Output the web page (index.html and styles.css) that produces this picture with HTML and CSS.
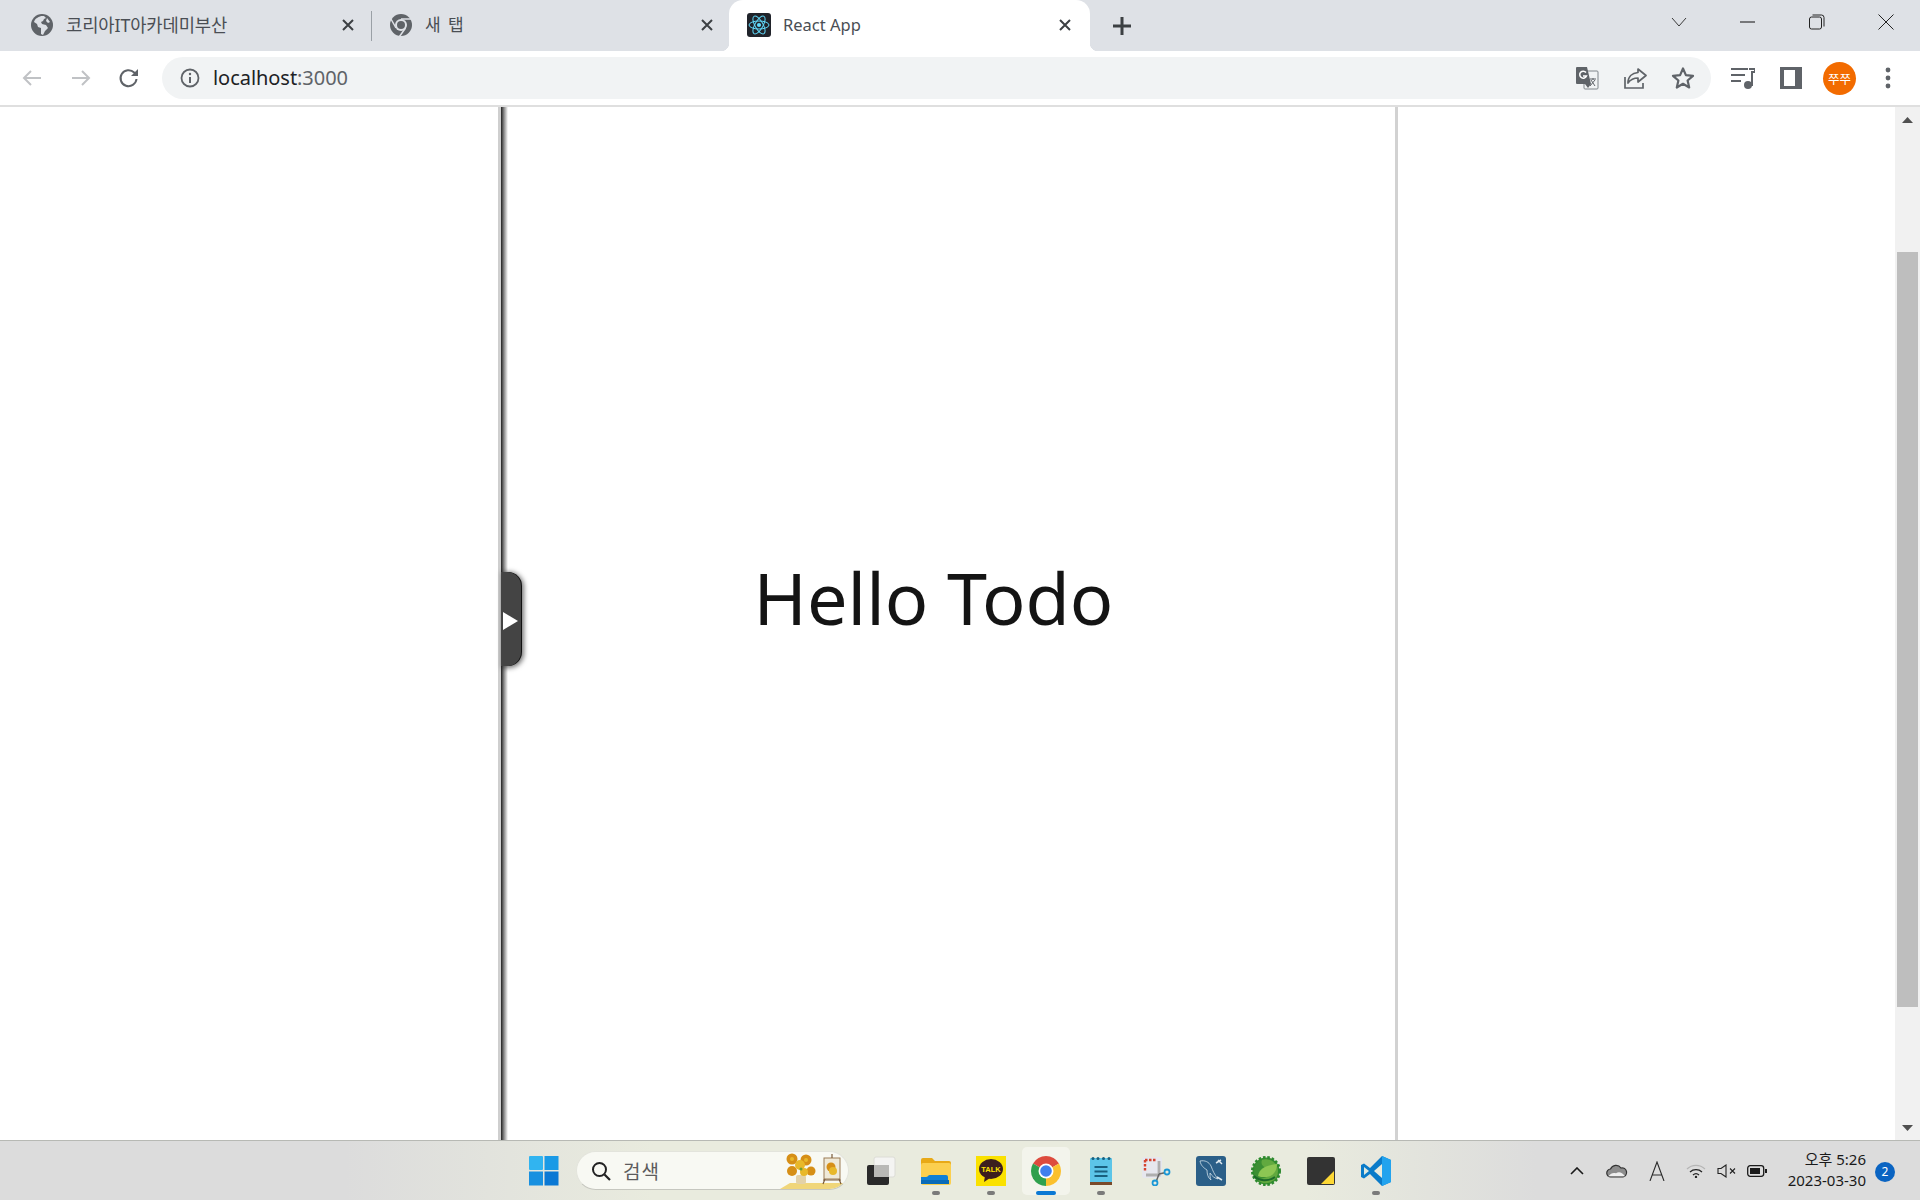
FILE: index.html
```html
<!DOCTYPE html>
<html lang="ko">
<head>
<meta charset="utf-8">
<title>React App</title>
<link rel="stylesheet" href="styles.css">
</head>
<body>
<div class="screen">
  <header class="tabstrip">
    <div class="tab tab-first">
      <svg class="fav" viewBox="0 0 24 24"><circle cx="12" cy="12" r="11" fill="#5f6368"/><path d="M11 3c-2 1-6 2-7 6l3 2 1 3 3 1v6l2 1 2-4 3-3-2-3-4-1-1-2 2-1 1-2 2-1-2-2z" fill="#dee1e6"/><path d="M17 5l3 4-2 1-2-2z" fill="#dee1e6"/></svg>
      <span class="tab-title title-ko">코리아IT아카데미부산</span>
      <svg class="tab-x" viewBox="0 0 14 14"><path d="M2 2l10 10M12 2L2 12" stroke="#3c4043" stroke-width="2"/></svg>
    </div>
    <div class="tab-sep"></div>
    <div class="tab tab-second">
      <svg class="fav" viewBox="0 0 24 24"><circle cx="12" cy="12" r="11" fill="#5f6368"/><circle cx="12" cy="12" r="6" fill="#dee1e6"/><circle cx="12" cy="12" r="4" fill="#5f6368"/><path d="M12 6h10M7 15L2 6M16.500 15l-6 8.500" stroke="#dee1e6" stroke-width="1.500"/></svg>
      <span class="tab-title title-ko spaced">새 탭</span>
      <svg class="tab-x" viewBox="0 0 14 14"><path d="M2 2l10 10M12 2L2 12" stroke="#3c4043" stroke-width="2"/></svg>
    </div>
    <div class="tab tab-active">
      <svg class="fav" viewBox="0 0 24 24"><rect width="24" height="24" rx="3" fill="#20232a"/><circle cx="12" cy="12" r="2.100" fill="#61dafb"/><g fill="none" stroke="#61dafb" stroke-width="1"><ellipse cx="12" cy="12" rx="10" ry="4"/><ellipse cx="12" cy="12" rx="10" ry="4" transform="rotate(60 12 12)"/><ellipse cx="12" cy="12" rx="10" ry="4" transform="rotate(120 12 12)"/></g></svg>
      <span class="tab-title">React App</span>
      <svg class="tab-x" viewBox="0 0 14 14"><path d="M2 2l10 10M12 2L2 12" stroke="#3c4043" stroke-width="2"/></svg>
    </div>
    <svg class="newtab" viewBox="0 0 18 18"><path d="M9 0v18M0 9h18" stroke="#3c4043" stroke-width="3"/></svg>
    <div class="win-controls">
      <svg class="win-btn win-chevron" viewBox="0 0 16 16"><path d="M1 4l7 8 7-8" fill="none" stroke="#3a3a3a"/></svg>
      <svg class="win-btn" viewBox="0 0 16 16"><path d="M0 8h15" stroke="#222" stroke-width="1.100"/></svg>
      <svg class="win-btn" viewBox="0 0 16 16"><rect x="0.500" y="3" width="12" height="12" rx="2" fill="none" stroke="#222"/><path d="M3.500 1h9a2.500 2.500 0 0 1 2.500 2.500v9" fill="none" stroke="#222"/></svg>
      <svg class="win-btn" viewBox="0 0 16 16"><path d="M0.500 0.500l15 15M15.500 0.500l-15 15" stroke="#222"/></svg>
    </div>
  </header>

  <nav class="toolbar">
    <svg class="tool" viewBox="0 0 24 24"><path d="M21 12H4M11 5l-7 7 7 7" fill="none" stroke="#c0c2c5" stroke-width="2"/></svg>
    <svg class="tool tool-fwd" viewBox="0 0 24 24"><path d="M3 12h17M13 5l7 7-7 7" fill="none" stroke="#c0c2c5" stroke-width="2"/></svg>
    <svg class="tool tool-reload" viewBox="0 0 24 24"><path d="M19.500 13a8 8 0 1 1-2.300-6.500L20 9" fill="none" stroke="#5f6368" stroke-width="2"/><path d="M21 3v7h-7z" fill="#5f6368"/></svg>
    <div class="omnibox">
      <svg class="info" viewBox="0 0 20 20"><circle cx="10" cy="10" r="8.500" fill="none" stroke="#5f6368" stroke-width="1.800"/><path d="M10 9v6" stroke="#5f6368" stroke-width="2"/><circle cx="10" cy="6" r="1.200" fill="#5f6368"/></svg>
      <span class="url">localhost<span class="url-port">:3000</span></span>
      <div class="omni-actions">
        <svg class="omni-icon" viewBox="0 0 24 24"><rect x="9" y="5" width="14" height="18" rx="1" fill="#f1f3f4" stroke="#80868b"/><path d="M1 2a1 1 0 0 1 1-1h10l4 17-3 4-3-4H2a1 1 0 0 1-1-1z" fill="#5f6368"/><path d="M11 6.500a3.500 3.500 0 1 0 .5 3.500H8" fill="none" stroke="#fff" stroke-width="1.500"/><path d="M15 13h6M18 12v2M20 14l-5 6M16 14l4 6" stroke="#5f6368"/></svg>
        <svg class="omni-icon" viewBox="0 0 24 24"><path d="M2 11v11h18v-5" fill="none" stroke="#5f6368" stroke-width="1.700"/><path d="M15 3l8 6.500-8 6.500v-4c-4 0-7 1-10 5 0-6 4-10 10-10.500z" fill="none" stroke="#5f6368" stroke-width="1.700" stroke-linejoin="round"/></svg>
        <svg class="omni-icon" viewBox="0 0 24 24"><path d="M12 2.500l2.900 6.600 7.100.7-5.400 4.700 1.600 7-6.200-3.700-6.200 3.700 1.600-7L2 9.800l7.100-.7z" fill="none" stroke="#5f6368" stroke-width="2.200" stroke-linejoin="round"/></svg>
      </div>
    </div>
    <div class="tool-actions">
      <svg class="tool" viewBox="0 0 24 24"><path d="M0 3h17M0 9h14M0 15h10" stroke="#5f6368" stroke-width="2"/><path d="M18 3h6v3h-3v14" fill="none" stroke="#5f6368" stroke-width="2"/><circle cx="17" cy="19" r="4" fill="#5f6368"/></svg>
      <svg class="tool" viewBox="0 0 24 24"><rect x="1" y="1" width="22" height="22" fill="#5f6368"/><rect x="5" y="4" width="11" height="16" fill="#fff"/></svg>
      <div class="avatar">쭈쭈</div>
      <svg class="tool" viewBox="0 0 24 24"><circle cx="12" cy="4" r="2.400" fill="#5f6368"/><circle cx="12" cy="12" r="2.400" fill="#5f6368"/><circle cx="12" cy="20" r="2.400" fill="#5f6368"/></svg>
    </div>
  </nav>

  <main class="viewport">
    <div class="side-left"></div>
    <section class="content">
      <h1 class="hello">Hello Todo</h1>
    </section>
    <div class="side-right"></div>
    <div class="scrollbar">
      <svg class="arrow" viewBox="0 0 11 6"><path d="M5.500 0L11 6H0z" fill="#505050"/></svg>
      <div class="track"><div class="thumb"></div></div>
      <svg class="arrow" viewBox="0 0 11 6"><path d="M0 0h11L5.500 6z" fill="#505050"/></svg>
    </div>
    <div class="handle"><span class="handle-arrow"></span></div>
  </main>

  <footer class="taskbar">
    <div class="task-center">
      <svg class="task-icon win" viewBox="0 0 30 30"><rect x="0" y="0" width="14" height="14" fill="#31b4f0" rx="1"/><rect x="15.500" y="0" width="14" height="14" fill="#1a9ae6"/><rect x="0" y="15.500" width="14" height="14" fill="#1890e0"/><rect x="15.500" y="15.500" width="14" height="14" fill="#0a78d4"/></svg>
      <div class="search">
        <svg class="search-glass" viewBox="0 0 20 20"><circle cx="8.500" cy="8.500" r="6.500" fill="none" stroke="#222" stroke-width="2"/><path d="M13.500 13.500L19 19" stroke="#222" stroke-width="2.200"/></svg>
        <span class="search-text">검색</span>
        <svg class="search-art" viewBox="0 0 64 38">
          <path d="M0 38l10-6h54l-4 6z" fill="#f0d67a"/>
          <rect x="16" y="24" width="10" height="9" rx="2" fill="#e3d2a8"/>
          <g fill="#d68f17"><circle cx="12" cy="8" r="5.500"/><circle cx="26" cy="9" r="5.500"/><circle cx="12" cy="20" r="5"/><circle cx="31" cy="20" r="4.500"/></g>
          <g fill="#e8b82a"><circle cx="20" cy="14" r="5"/><circle cx="24" cy="21" r="4"/><circle cx="12" cy="8" r="2"/><circle cx="26" cy="9" r="2"/></g>
          <circle cx="21" cy="18" r="1.500" fill="#6f9e34"/>
          <rect x="44" y="7" width="16" height="21" fill="#efe9d8" stroke="#9b7d55"/>
          <circle cx="51" cy="16" r="4.500" fill="#d68f17"/><circle cx="53" cy="20" r="4" fill="#e8b82a"/>
          <path d="M52 3v4M45 28l-2 5M59 28l2 5M43 29h18" stroke="#7a5a3a" stroke-width="1.200" fill="none"/>
        </svg>
      </div>
      <div class="apps">
        <div class="app">
          <svg class="task-icon" viewBox="0 0 30 30"><rect x="8" y="1" width="21" height="20" rx="2" fill="#f4f4f2" stroke="#dcdcd6"/><rect x="1" y="9" width="22" height="20" rx="2" fill="#2a2a2a"/><rect x="8" y="9" width="15" height="12" fill="#b9b9b6"/></svg>
        </div>
        <div class="app open">
          <svg class="task-icon" viewBox="0 0 30 30"><path d="M0 4a2 2 0 0 1 2-2h9l3 3h14a2 2 0 0 1 2 2v2H0z" fill="#e8a917"/><rect y="7" width="30" height="22" rx="2" fill="#fbcf4f"/><path d="M0 21h5c2 0 2-2 4-2h16a2 2 0 0 1 2 2v3H0z" fill="#0f80d6"/><rect y="24" width="28" height="4" fill="#0a6bb8"/></svg>
        </div>
        <div class="app open">
          <div class="kakao"><svg viewBox="0 0 30 30"><ellipse cx="15" cy="13" rx="12" ry="10" fill="#3c1e1e"/><path d="M9 20l-1 6 6-4z" fill="#3c1e1e"/><text x="15" y="16" class="kakao-text">TALK</text></svg></div>
        </div>
        <div class="app open active">
          <svg class="task-icon" viewBox="0 0 30 30"><path d="M15 15L2.010 7.500A15 15 0 0 1 27.990 7.500z" fill="#dd4b3e"/><path d="M15 15L15 30A15 15 0 0 1 2.010 7.500z" fill="#2fa04d"/><path d="M15 15L27.990 7.500A15 15 0 0 1 15 30z" fill="#fbc02d"/><circle cx="15" cy="15" r="7.500" fill="#fff"/><circle cx="15" cy="15" r="5.800" fill="#3f80ee"/></svg>
        </div>
        <div class="app open">
          <svg class="task-icon" viewBox="0 0 30 30"><rect x="4" y="2" width="22" height="27" rx="1" fill="#5cc5e8"/><rect x="4" y="26" width="22" height="3" fill="#7a4a2a"/><g fill="#17607f"><circle cx="7" cy="2.500" r="1.500"/><circle cx="12" cy="2.500" r="1.500"/><circle cx="17.500" cy="2.500" r="1.500"/><circle cx="23" cy="2.500" r="1.500"/></g><path d="M8.500 11h13M8.500 15.500h13M8.500 20h13" stroke="#185f7e" stroke-width="2"/></svg>
        </div>
        <div class="app">
          <svg class="task-icon" viewBox="0 0 30 30"><rect x="1" y="1" width="20" height="21" rx="2" fill="#e6e7ee"/><path d="M4 4h12M4 4v11" fill="none" stroke="#d5432f" stroke-width="2.400" stroke-dasharray="2.500 1.500"/><path d="M18 5v14H5" fill="none" stroke="#aeaeae" stroke-width="2.800"/><path d="M18 18l9-2M18 18l-3 8" stroke="#666" stroke-width="1.500"/><circle cx="26" cy="16" r="2.500" fill="#e9ebde" stroke="#1b97d6" stroke-width="1.800"/><circle cx="14" cy="27" r="2.500" fill="#e9ebde" stroke="#1b97d6" stroke-width="1.800"/></svg>
        </div>
        <div class="app">
          <svg class="task-icon" viewBox="0 0 30 30"><rect width="30" height="30" rx="3" fill="#2b5f88"/><path d="M4 5c5-1 9 1 11 5 2 5 3 8 7 13-4-1-6-3-8-6 0 3 0 5 1 7-3-2-4-6-4-10-3-2-6-4-7-9z" fill="none" stroke="#cfdfe9" stroke-width="0.800"/><path d="M20 7l5-3M22 4l4 4" stroke="#dfe9ef" stroke-width="1.500"/><path d="M21 21l5 3" stroke="#dfe9ef" stroke-width="1.500"/></svg>
        </div>
        <div class="app">
          <svg class="task-icon" viewBox="0 0 30 30"><circle cx="15" cy="15" r="13.500" fill="#3c8f33" stroke="#2d8a2e" stroke-width="3" stroke-dasharray="2.500 1.800"/><path d="M11 4a12 12 0 0 1 16 11 12 12 0 0 1-21 8c6 0 15-2 16-10-3 0-14-1-11-9z" fill="#62a93f"/><path d="M7 20C8 12 16 9 26 8c0 8-5 13-12 13-3 0-5 0-7-1z" fill="#8dc653"/><path d="M3 20c5 5 14 6 21 1" stroke="#1d6a2b" stroke-width="2" fill="none"/></svg>
        </div>
        <div class="app">
          <svg class="task-icon" viewBox="0 0 30 30"><rect x="1" y="1" width="28" height="28" rx="2" fill="#333"/><path d="M15 28l13-13v13z" fill="#fdd835"/></svg>
        </div>
        <div class="app open">
          <svg class="task-icon" viewBox="0 0 30 30"><path d="M21 0l9 4v22l-9 4-12-12-6 4.500-3-1.500V9l3-1.500L9 12z" fill="#0a7bc9"/><path d="M21 0l9 4v22l-9 4z" fill="#22a3ee"/><path d="M3 11l5 4-5 4z" fill="#dfe9de"/><path d="M21 8l-8 7 8 7z" fill="#e9ebde"/></svg>
        </div>
      </div>
    </div>
    <div class="tray">
      <svg class="tray-chev" viewBox="0 0 14 8"><path d="M1 7l6-6 6 6" fill="none" stroke="#1a1a1a" stroke-width="1.600"/></svg>
      <svg class="tray-cloud" viewBox="0 0 22 14"><path d="M5 13a4 4 0 0 1-.5-8A6 6 0 0 1 15 4a4.500 4.500 0 0 1 2 9z" fill="#8d8d8d" stroke="#333" stroke-width="1.200"/><path d="M2 12.300c3-3 5-4 8-3 3-2 6-1 9 3z" fill="#efefef"/></svg>
      <svg class="tray-a" viewBox="0 0 16 20"><path d="M1 20L8 1l7 19M3.500 14h9" fill="none" stroke="#2a2a2a" stroke-width="1.100"/></svg>
      <svg class="tray-wifi" viewBox="0 0 20 14"><path d="M1 5a13 13 0 0 1 18 0" fill="none" stroke="#b5b5b5" stroke-width="1.200"/><path d="M4 8a9 9 0 0 1 12 0M7 11a4.500 4.500 0 0 1 6 0" fill="none" stroke="#222" stroke-width="1.300"/><circle cx="10" cy="13" r="1.200" fill="#222"/></svg>
      <svg class="tray-sound" viewBox="0 0 20 14"><path d="M1 4.500h3L9 1v12L4 9.500H1z" fill="none" stroke="#222" stroke-width="1.100"/><path d="M13 4.500l5 5M18 4.500l-5 5" stroke="#222" stroke-width="1.100"/></svg>
      <svg class="tray-batt" viewBox="0 0 20 12"><rect x="0.700" y="0.700" width="16" height="10.600" rx="2.500" fill="none" stroke="#1a1a1a" stroke-width="1.300"/><rect x="3" y="3" width="10" height="6" fill="#1a1a1a"/><rect x="18" y="4" width="2" height="4" fill="#1a1a1a"/></svg>
      <div class="clock"><span>오후 5:26</span><span>2023-03-30</span></div>
      <div class="badge">2</div>
    </div>
  </footer>
</div>
</body>
</html>
```

FILE: styles.css
```css
* { box-sizing: border-box; }
html, body { margin: 0; padding: 0; height: 100%; overflow: hidden; background: #fff; }
svg { display: block; flex: none; }
.screen {
  width: 1920px; height: 1200px; display: flex; flex-direction: column;
  font-family: "Noto Sans", "Noto Sans CJK KR", sans-serif; color: #202124;
}

/* Tab strip */
.tabstrip { height: 51px; background: #dee1e6; display: flex; align-items: stretch; flex: none; }
.tab { position: relative; display: flex; align-items: center; height: 51px; }
.tab-first { width: 371px; padding: 0 16px 2px 30px; }
.tab-second { width: 357px; padding: 0 15px 2px 17px; }
.tab-sep { width: 1px; height: 30px; margin-top: 11px; background: #9aa0a6; flex: none; }
.tab-active { width: 361px; padding: 0 18px 1px 18px; background: #fff; border-radius: 14px 14px 0 0; }
.tab-active::before, .tab-active::after {
  content: ""; position: absolute; bottom: 0; width: 8px; height: 8px;
}
.tab-active::before { left: -8px; background: radial-gradient(circle at 0 0, #dee1e6 8px, #fff 8.500px); }
.tab-active::after { right: -8px; background: radial-gradient(circle at 100% 0, #dee1e6 8px, #fff 8.500px); }
.fav { width: 24px; height: 24px; }
.tab-title { margin-left: 12px; flex: 1; font-size: 16.500px; color: #4a4e54; white-space: nowrap; line-height: 20px; }
.title-ko { margin-left: 12px; font-size: 17.700px; letter-spacing: -0.100px; }
.tab-title.spaced { margin-left: 12px; font-size: 17px; letter-spacing: 1.500px; }
.tab-x { width: 14px; height: 14px; }
.newtab { width: 18px; height: 18px; margin: 17px 0 0 23px; }
.win-controls { margin-left: auto; display: flex; gap: 53px; padding: 14px 26px 0 0; }
.win-btn { width: 16px; height: 16px; }

/* Toolbar */
.toolbar { height: 56px; flex: none; background: #fff; border-bottom: 2px solid #dfdfdf; display: flex; align-items: flex-start; padding: 6px 0 0 20px; }
.toolbar > .tool { width: 24px; height: 24px; margin: 9px 25px 0 0; }
.toolbar > .tool-fwd { margin-right: 24px; }
.toolbar > .tool-reload { margin-right: 21px; }
.omnibox { width: 1549px; height: 42px; border-radius: 21px; background: #f1f3f4; display: flex; align-items: center; padding: 0 16px 0 18px; }
.info { width: 20px; height: 20px; }
.url { margin-left: 13px; font-size: 20px; color: #202124; letter-spacing: -0.050px; line-height: 24px; }
.url-port { color: #5f6368; }
.omni-actions { margin-left: auto; display: flex; gap: 24px; }
.omni-icon { width: 24px; height: 24px; }
.tool-actions { display: flex; align-items: center; gap: 24px; margin-left: 20px; height: 42px; }
.tool { width: 24px; height: 24px; }
.avatar {
  width: 33px; height: 33px; border-radius: 50%; background: #f26b00; color: #fff; flex: none;
  margin: 0 -4px 0 -4px; font: 12.500px/33px "Noto Sans CJK KR", sans-serif; text-align: center;
}

/* Page area */
.viewport { position: relative; flex: 1; display: flex; min-height: 0; background: #fff; }
.side-left { width: 501px; flex: none; border-right: 3px solid #cfcfcf; }
.content {
  width: 897px; flex: none; border-right: 3px solid #d2d2d2; display: flex; align-items: center; justify-content: center;
  padding: 0 29px 54px 0; background: linear-gradient(to right, #1f1f1f, #8a8a8a 3px, #fff 7px) left / 8px 100% no-repeat, #fff;
}
.hello { margin: 0; font-family: "Noto Sans", sans-serif; font-weight: 400; font-size: 72px; line-height: 96px; color: #141414; }
.side-right { flex: 1; }
.scrollbar { width: 25px; flex: none; background: #f1f1f1; display: flex; flex-direction: column; align-items: center; padding: 10px 0 9px; }
.arrow { width: 11px; height: 6px; }
.track { flex: 1; width: 100%; padding: 129px 2px 118px; }
.thumb { height: 100%; background: #bebebe; }
.handle {
  position: absolute; left: 501px; top: 465px; width: 20px; height: 94px;
  background: #444; border-radius: 0 14px 14px 0; box-shadow: 1px 0 0 #111, 2px 1px 5px 1px rgba(0,0,0,.55);
  display: flex; align-items: center; padding-left: 2px;
}
.handle-arrow { width: 0; height: 0; border-left: 15px solid #fff; border-top: 9px solid transparent; border-bottom: 9px solid transparent; margin-top: 4px; }

/* Taskbar */
.taskbar {
  height: 60px; flex: none; position: relative; border-top: 1px solid #b7b9b4; display: flex; align-items: center;
  background: linear-gradient(to right, #dcdcdc 0, #dcdcdc 18%, #e9ebde 34%, #e9ebde 68%, #dcdcdc 80%, #dcdcdc 100%);
  padding-left: 529px;
}
.task-center { display: flex; align-items: center; }
.task-icon { width: 30px; height: 30px; }
.win { margin-right: 17px; }
.search {
  width: 273px; height: 39px; border-radius: 20px; background: #f8f9f3; border: 1px solid #e3e4dc; border-bottom-color: #c6c7bf;
  display: flex; align-items: center; padding-left: 14px; position: relative; overflow: hidden;
}
.search-glass { width: 20px; height: 20px; }
.search-text { margin-left: 12px; font: 19px/24px "Noto Sans CJK KR", sans-serif; color: #5c5c5c; letter-spacing: 1px; }
.search-art { position: absolute; right: 4px; bottom: 0; width: 64px; height: 38px; }
.apps { display: flex; margin-left: 4px; }
.app { position: relative; width: 55px; height: 48px; display: flex; align-items: center; justify-content: center; }
.app.open::after { content: ""; position: absolute; bottom: 0; left: 24px; width: 8px; height: 4px; border-radius: 2px; background: #7a7a7a; }
.app.active { background: #f3f4ec; border-radius: 5px; width: 48px; margin: 0 3px 0 4px; }
.app.active::after { left: 14px; width: 20px; background: #0a78d4; }
.kakao { width: 30px; height: 30px; background: #fae100; }
.kakao-text { font: 700 7.500px "Liberation Sans", sans-serif; fill: #fae100; text-anchor: middle; }

/* Tray */
.tray { position: absolute; right: 0; top: 0; height: 59px; width: 356px; display: flex; align-items: center; }
.tray-chev { width: 14px; height: 8px; margin-left: 6px; }
.tray-cloud { width: 22px; height: 14px; margin-left: 22px; }
.tray-a { width: 16px; height: 20px; margin-left: 21px; }
.tray-wifi { width: 20px; height: 14px; margin-left: 21px; }
.tray-sound { width: 20px; height: 14px; margin-left: 11px; }
.tray-batt { width: 20px; height: 12px; margin-left: 10px; }
.clock { margin-left: auto; margin-top: -2px; display: flex; flex-direction: column; align-items: flex-end; font: 15px/21px "Noto Sans", "Noto Sans CJK KR", sans-serif; color: #1a1a1a; }
.badge { width: 20px; height: 20px; border-radius: 50%; background: #0a64c2; color: #fff; font-size: 12px; line-height: 20px; text-align: center; margin: 2px 25px 0 9px; }
```
